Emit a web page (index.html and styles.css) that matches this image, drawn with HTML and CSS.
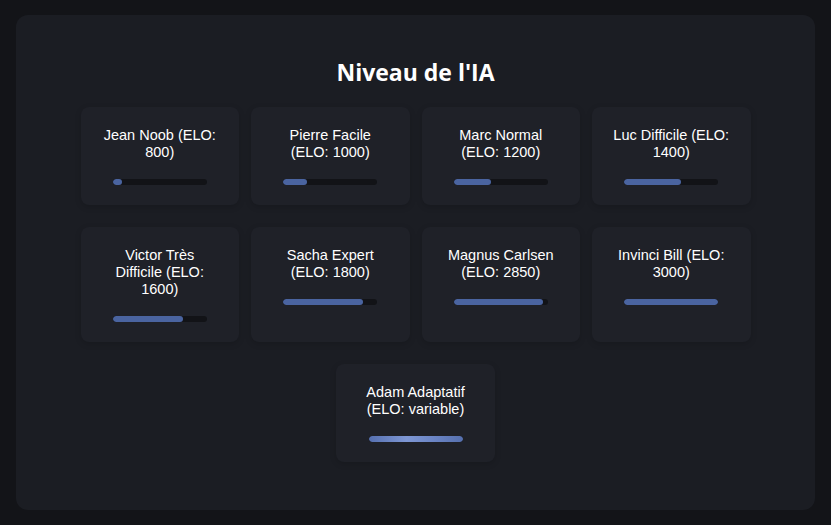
FILE: index.html
```html
<!DOCTYPE html>
<html lang="fr">
<head>
<meta charset="utf-8">
<title>Niveau de l'IA</title>
<link rel="stylesheet" href="styles.css">
</head>
<body>
<main class="panel">
  <h2 class="title">Niveau de l'IA</h2>
  <div class="levels">
    <div class="level">
      <div class="name">Jean Noob (ELO: 800)</div>
      <div class="bar"><div class="fill" style="width:10%"></div></div>
    </div>
    <div class="level">
      <div class="name">Pierre Facile (ELO: 1000)</div>
      <div class="bar"><div class="fill" style="width:25%"></div></div>
    </div>
    <div class="level">
      <div class="name">Marc Normal (ELO: 1200)</div>
      <div class="bar"><div class="fill" style="width:40%"></div></div>
    </div>
    <div class="level">
      <div class="name">Luc Difficile (ELO: 1400)</div>
      <div class="bar"><div class="fill" style="width:60%"></div></div>
    </div>
    <div class="level">
      <div class="name">Victor Très Difficile (ELO: 1600)</div>
      <div class="bar"><div class="fill" style="width:75%"></div></div>
    </div>
    <div class="level">
      <div class="name">Sacha Expert (ELO: 1800)</div>
      <div class="bar"><div class="fill" style="width:85%"></div></div>
    </div>
    <div class="level">
      <div class="name">Magnus Carlsen (ELO: 2850)</div>
      <div class="bar"><div class="fill" style="width:95%"></div></div>
    </div>
    <div class="level">
      <div class="name">Invinci Bill (ELO: 3000)</div>
      <div class="bar"><div class="fill" style="width:100%"></div></div>
    </div>
    <div class="level">
      <div class="name">Adam Adaptatif (ELO: variable)</div>
      <div class="bar"><div class="fill fill-adaptive" style="width:100%"></div></div>
    </div>
  </div>
</main>
</body>
</html>
```

FILE: styles.css
```css
* { box-sizing: border-box; }

html, body {
  height: 100%;
}

body {
  margin: 0;
  padding: 15px 16px;
  background: #131418;
  color: #ffffff;
  font-family: "Liberation Sans", Arial, sans-serif;
}

.panel {
  height: 100%;
  background: #1b1d23;
  border-radius: 12px;
  padding: 42px 20px 20px;
  display: flex;
  flex-direction: column;
  align-items: center;
}

.title {
  margin: 0 0 19px;
  font-family: "Open Sans", sans-serif;
  font-weight: 700;
  font-size: 23px;
  line-height: 31px;
  text-align: center;
}

.levels {
  width: 670px;
  display: flex;
  flex-wrap: wrap;
  justify-content: center;
  gap: 22px 12px;
}

.level {
  flex: 0 0 calc((100% - 36px) / 4);
  background: #1f2128;
  border-radius: 8px;
  padding: 20px 20.5px 20px;
  display: flex;
  flex-direction: column;
  align-items: center;
  box-shadow: 0 2px 6px rgba(0, 0, 0, 0.15);
}

.name {
  font-size: 14.5px;
  line-height: 17px;
  text-align: center;
}

.bar {
  width: 94px;
  height: 6px;
  margin-top: 18px;
  border-radius: 3px;
  background: #121317;
  overflow: hidden;
}

.fill {
  height: 100%;
  border-radius: 3px;
  background: #4a64a0;
}

.fill-adaptive {
  background: linear-gradient(90deg, #5670b0 0%, #7e97d4 40%, #6a84c4 70%, #5670ae 100%);
}
```
